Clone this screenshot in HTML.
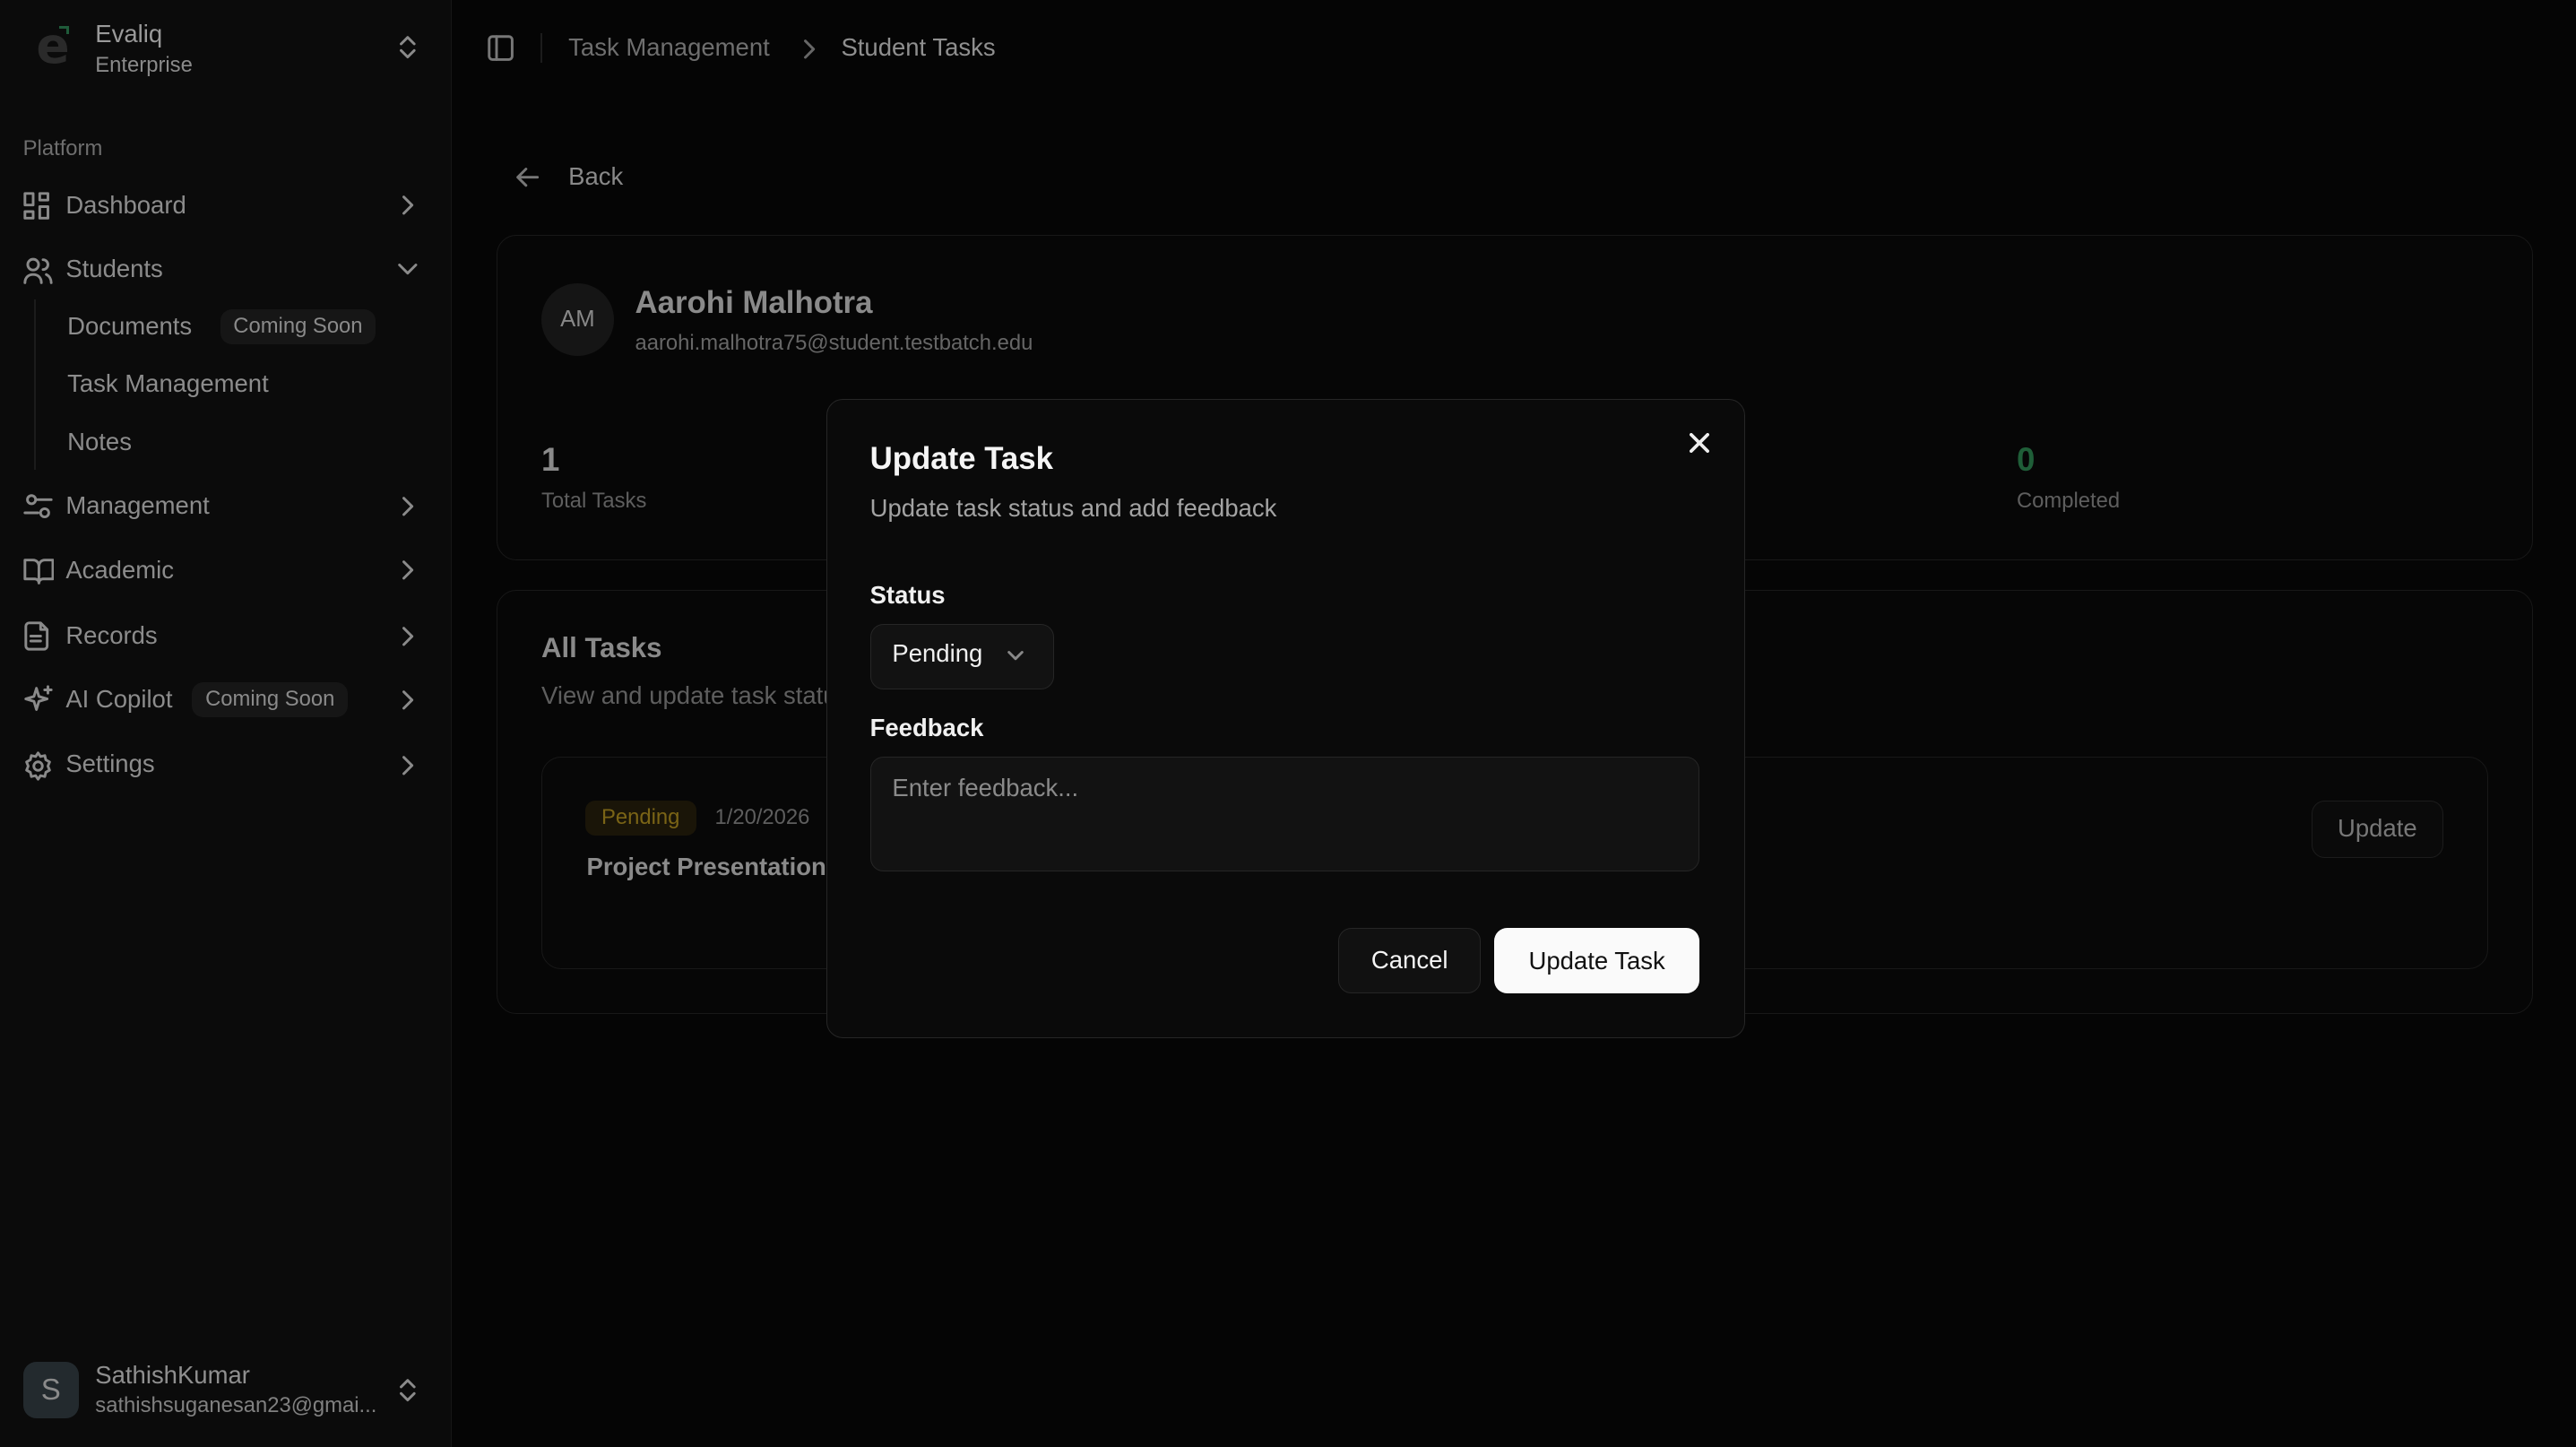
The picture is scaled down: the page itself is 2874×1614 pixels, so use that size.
<!DOCTYPE html>
<html><head><meta charset="utf-8"><style>
*{box-sizing:border-box;margin:0;padding:0}
html,body{width:2874px;height:1614px;overflow:hidden;background:#050505}
#r{zoom:1.83291;width:1568px;height:881px;position:relative;font-family:"Liberation Sans",sans-serif;color:#8a8a8a}
.a{position:absolute;white-space:nowrap}
svg{position:absolute;fill:none;stroke:currentColor;stroke-width:1.6;stroke-linecap:round;stroke-linejoin:round}
.side{position:absolute;left:0;top:0;width:275px;height:881px;background:#0b0b0b;border-right:1px solid #161616}
.nav{font-size:15px;color:#8c8c8c}
.badge{position:absolute;background:#161616;border-radius:7px;font-size:13px;color:#8a8a8a;padding:3px 8px}
.card{position:absolute;border:1px solid #181818;border-radius:12px;background:#060606}
</style></head><body><div id="r">
<div class="side">
  <div class="a" style="left:22px;top:13px;font-size:30px;color:#2a2a2a;font-weight:bold;font-family:'DejaVu Sans',sans-serif;line-height:30px">e</div>
  <div class="a" style="left:36px;top:16px;width:6px;height:5px;border-top:2px solid #1f5b3a;border-right:2px solid #1f5b3a"></div>
  <div class="a" style="left:58px;top:12px;font-size:15px;color:#9a9a9a">Evaliq</div>
  <div class="a" style="left:58px;top:32px;font-size:13px;color:#8a8a8a">Enterprise</div>
  <svg style="left:241px;top:21px" width="14" height="16" viewBox="0 0 14 16"><path d="M3 6l4-4 4 4M3 10l4 4 4-4"/></svg>
  <div class="a" style="left:14px;top:83px;font-size:13px;color:#6e6e6e">Platform</div>

  <svg style="left:14px;top:117px" width="17" height="17" viewBox="0 0 17 17"><rect x="1" y="1" width="5" height="7"/><rect x="10" y="1" width="5" height="4"/><rect x="10" y="9" width="5" height="7"/><rect x="1" y="12" width="5" height="4"/></svg>
  <div class="a nav" style="left:40px;top:116px">Dashboard</div>
  <svg style="left:243px;top:118px" width="10" height="14" viewBox="0 0 10 14"><path d="M3 2l5 5-5 5"/></svg>

  <svg style="left:14px;top:156px" width="18" height="17" viewBox="0 0 18 17"><circle cx="6" cy="5" r="3.3"/><path d="M1 16c0-3 2-5 5-5s5 2 5 5M12 2a3 3 0 010 6M14 11c2 1 3 3 3 5"/></svg>
  <div class="a nav" style="left:40px;top:155px">Students</div>
  <svg style="left:241px;top:158px" width="14" height="10" viewBox="0 0 14 10"><path d="M2 3l5 5 5-5"/></svg>
  <div class="a" style="left:21px;top:182px;width:1px;height:104px;background:#1c1c1c"></div>
  <div class="a nav" style="left:41px;top:190px">Documents</div>
  <div class="badge" style="left:134px;top:188px">Coming Soon</div>
  <div class="a nav" style="left:41px;top:225px">Task Management</div>
  <div class="a nav" style="left:41px;top:260px">Notes</div>

  <svg style="left:14px;top:300px" width="18" height="17" viewBox="0 0 18 17"><circle cx="5" cy="4" r="2.5"/><path d="M8 4h9M1 12h8"/><circle cx="13" cy="12" r="2.5"/></svg>
  <div class="a nav" style="left:40px;top:299px">Management</div>
  <svg style="left:243px;top:301px" width="10" height="14" viewBox="0 0 10 14"><path d="M3 2l5 5-5 5"/></svg>

  <svg style="left:14px;top:339px" width="19" height="17" viewBox="0 0 19 17"><path d="M1 2h5a3.5 3.5 0 013.5 3.5V16a2.5 2.5 0 00-2.5-2.5H1zM18 2h-5a3.5 3.5 0 00-3.5 3.5V16a2.5 2.5 0 012.5-2.5H18z"/></svg>
  <div class="a nav" style="left:40px;top:338px">Academic</div>
  <svg style="left:243px;top:340px" width="10" height="14" viewBox="0 0 10 14"><path d="M3 2l5 5-5 5"/></svg>

  <svg style="left:15px;top:378px" width="16" height="18" viewBox="0 0 16 18"><path d="M10 1H3a2 2 0 00-2 2v12a2 2 0 002 2h9a2 2 0 002-2V5zM10 1v4h4M4 9h6M4 12h6"/></svg>
  <div class="a nav" style="left:40px;top:378px">Records</div>
  <svg style="left:243px;top:380px" width="10" height="14" viewBox="0 0 10 14"><path d="M3 2l5 5-5 5"/></svg>

  <svg style="left:14px;top:417px" width="19" height="19" viewBox="0 0 19 19"><path d="M8 2l1.5 5 5 1.5-5 1.5L8 15l-1.5-5-5-1.5 5-1.5zM15 1v4M13 3h4"/></svg>
  <div class="a nav" style="left:40px;top:417px">AI Copilot</div>
  <div class="badge" style="left:117px;top:415px">Coming Soon</div>
  <svg style="left:243px;top:419px" width="10" height="14" viewBox="0 0 10 14"><path d="M3 2l5 5-5 5"/></svg>

  <svg style="left:14px;top:457px" width="18" height="18" viewBox="0 0 18 18"><circle cx="9" cy="9" r="2.6"/><path d="M9 1l1.5 2.2 2.6-.6.6 2.6L16 6.5l-1 2.5 1 2.5-2.3 1.3-.6 2.6-2.6-.6L9 17l-1.5-2.2-2.6.6-.6-2.6L2 11.5l1-2.5-1-2.5 2.3-1.3.6-2.6 2.6.6z"/></svg>
  <div class="a nav" style="left:40px;top:456px">Settings</div>
  <svg style="left:243px;top:459px" width="10" height="14" viewBox="0 0 10 14"><path d="M3 2l5 5-5 5"/></svg>

  <div class="a" style="left:14px;top:829px;width:34px;height:34px;border-radius:8px;background:#232a2e;color:#8a8a8a;font-size:18px;text-align:center;line-height:34px">S</div>
  <div class="a" style="left:58px;top:828px;font-size:15px;color:#8f8f8f">SathishKumar</div>
  <div class="a" style="left:58px;top:848px;font-size:13px;color:#808080">sathishsuganesan23@gmai...</div>
  <svg style="left:241px;top:838px" width="14" height="16" viewBox="0 0 14 16"><path d="M3 6l4-4 4 4M3 10l4 4 4-4"/></svg>
</div>

<svg style="left:296px;top:21px;color:#777" width="17" height="17" viewBox="0 0 17 17"><rect x="1.5" y="1.5" width="14" height="14" rx="2"/><path d="M6 1.5v14"/></svg>
<div class="a" style="left:329px;top:20px;width:1px;height:18px;background:#1c1c1c"></div>
<div class="a" style="left:346px;top:20px;font-size:15px;color:#6e6e6e">Task Management</div>
<svg style="left:487px;top:23px;color:#666" width="10" height="14" viewBox="0 0 10 14"><path d="M3 2l5 5-5 5"/></svg>
<div class="a" style="left:512px;top:20px;font-size:15px;color:#8f8f8f">Student Tasks</div>

<svg style="left:313px;top:100px;color:#777" width="16" height="16" viewBox="0 0 16 16"><path d="M14 8H2M7 3L2 8l5 5"/></svg>
<div class="a" style="left:346px;top:99px;font-size:15px;color:#888">Back</div>

<div class="card" style="left:302px;top:143px;width:1240px;height:198px">
  <div class="a" style="left:27px;top:29px;width:44px;height:44px;border-radius:50%;background:#151515;text-align:center;line-height:44px;font-size:14px;color:#888">AM</div>
  <div class="a" style="left:84px;top:30px;font-size:19px;font-weight:bold;color:#8a8a8a">Aarohi Malhotra</div>
  <div class="a" style="left:84px;top:58px;font-size:13px;color:#666">aarohi.malhotra75@student.testbatch.edu</div>
  <div class="a" style="left:27px;top:125px;font-size:20px;font-weight:bold;color:#8a8a8a">1</div>
  <div class="a" style="left:27px;top:154px;font-size:13px;color:#5e5e5e">Total Tasks</div>
  <div class="a" style="left:925px;top:125px;font-size:20px;font-weight:bold;color:#1f5e38">0</div>
  <div class="a" style="left:925px;top:154px;font-size:13px;color:#5e5e5e">Completed</div>
</div>

<div class="card" style="left:302px;top:359px;width:1240px;height:258px">
  <div class="a" style="left:27px;top:25px;font-size:17px;font-weight:bold;color:#8a8a8a">All Tasks</div>
  <div class="a" style="left:27px;top:55px;font-size:15px;color:#5e5e5e">View and update task status</div>
  <div class="card" style="left:27px;top:101px;width:1185px;height:129px;background:#070707">
    <div class="a" style="left:26px;top:26px;background:#1a1508;color:#7a6416;font-size:13px;padding:3px 10px;border-radius:6px">Pending</div>
    <div class="a" style="left:105px;top:29px;font-size:13px;color:#5e5e5e">1/20/2026</div>
    <div class="a" style="left:27px;top:58px;font-size:15px;font-weight:bold;color:#8a8a8a">Project Presentation</div>
    <div class="a" style="left:1077px;top:26px;width:80px;height:35px;border:1px solid #1c1c1c;border-radius:8px;background:#0a0a0a;text-align:center;line-height:33px;font-size:15px;color:#777">Update</div>
  </div>
</div>

<div class="a" style="left:503px;top:243px;width:559px;height:389px;background:#0a0a0a;border:1px solid #262626;border-radius:10px">
  <svg style="left:525px;top:20px;color:#eee;stroke-width:2" width="12" height="12" viewBox="0 0 12 12"><path d="M1 1l10 10M11 1L1 11"/></svg>
  <div class="a" style="left:26px;top:25px;font-size:19px;font-weight:bold;color:#f5f5f5">Update Task</div>
  <div class="a" style="left:26px;top:57px;font-size:15px;color:#a3a3a3">Update task status and add feedback</div>
  <div class="a" style="left:26px;top:110px;font-size:15px;font-weight:bold;color:#f0f0f0">Status</div>
  <div class="a" style="left:26px;top:136px;width:112px;height:40px;border:1px solid #262626;border-radius:8px;background:#121212">
    <div class="a" style="left:13px;top:9px;font-size:15px;color:#f0f0f0">Pending</div>
    <svg style="left:82px;top:14px;color:#888" width="12" height="10" viewBox="0 0 12 10"><path d="M2 3l4 4 4-4"/></svg>
  </div>
  <div class="a" style="left:26px;top:191px;font-size:15px;font-weight:bold;color:#f0f0f0">Feedback</div>
  <div class="a" style="left:26px;top:217px;width:505px;height:70px;border:1px solid #262626;border-radius:8px;background:#121212">
    <div class="a" style="left:13px;top:10px;font-size:15px;color:#8a8a8a">Enter feedback...</div>
  </div>
  <div class="a" style="left:311px;top:321px;width:87px;height:40px;border:1px solid #262626;border-radius:8px;background:#111;text-align:center;line-height:38px;font-size:15px;color:#f5f5f5">Cancel</div>
  <div class="a" style="left:406px;top:321px;width:125px;height:40px;border-radius:8px;background:#fafafa;text-align:center;line-height:40px;font-size:15px;color:#111">Update Task</div>
</div>
</div></body></html>
